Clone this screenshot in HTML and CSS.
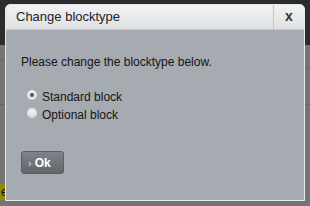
FILE: index.html
```html
<!DOCTYPE html>
<html>
<head>
<meta charset="utf-8">
<link rel="stylesheet" href="styles.css">
</head>
<body>
<div class="page">
  <div class="badge">e</div>
  <div class="dialog">
    <div class="titlebar">
      <div class="title">Change blocktype</div>
      <div class="close">x</div>
    </div>
    <div class="content">
      <p class="intro">Please change the blocktype below.</p>
      <div class="options">
        <label class="option"><input type="radio" name="bt" checked><span>Standard block</span></label>
        <label class="option"><input type="radio" name="bt"><span>Optional block</span></label>
      </div>
      <button class="ok"><span class="chev">›</span>Ok</button>
    </div>
  </div>
</div>
</body>
</html>
```
FILE: styles.css
```css
html, body {
  margin: 0;
  padding: 0;
}
body {
  width: 310px;
  height: 206px;
  overflow: hidden;
  font-family: "Liberation Sans", Arial, sans-serif;
}
.page {
  position: relative;
  width: 310px;
  height: 206px;
  box-sizing: border-box;
  padding: 4px 5px 0 5px;
  background:
    linear-gradient(#666 0 0) 0 59px / 5px 1px no-repeat,
    linear-gradient(#666 0 0) 0 104px / 5px 1px no-repeat,
    linear-gradient(#666 0 0) 305px 67px / 5px 1px no-repeat,
    linear-gradient(#666 0 0) 305px 104px / 5px 1px no-repeat,
    linear-gradient(to bottom, #2c2c2c 0, #2c2c2c 45px, #747474 45px, #747474 100%);
}
.badge {
  position: absolute;
  left: 0;
  top: 184px;
  width: 17px;
  height: 16px;
  background: #8c8a06;
  color: #111;
  font-size: 12px;
  line-height: 16px;
  padding-left: 1px;
  box-sizing: border-box;
}
.dialog {
  position: relative;
  width: 300px;
  height: 197px;
  box-sizing: border-box;
  border: 1px solid #e6e8ea;
  border-radius: 5px 5px 0 0;
  background: #a6aab1;
  display: flex;
  flex-direction: column;
}
.titlebar {
  height: 24px;
  display: flex;
  background: linear-gradient(to bottom, #f1f2f3, #dfe1e4);
  border-radius: 4px 4px 0 0;
  border-bottom: 1px solid #c9ccd0;
}
.title {
  flex: 1;
  padding-left: 10px;
  font-size: 13px;
  line-height: 24px;
  color: #222;
}
.close {
  width: 30px;
  border-left: 1px solid #c4c7cb;
  text-align: center;
  font-weight: bold;
  font-size: 14px;
  line-height: 23px;
  color: #333;
}
.content {
  flex: 1;
  padding: 25px 15px 0 15px;
  color: #151515;
  font-size: 12px;
}
.intro {
  margin: 0;
  line-height: 14px;
}
.options {
  margin-top: 19px;
  display: flex;
  flex-direction: column;
  padding-left: 6px;
}
.option {
  display: flex;
  align-items: center;
  height: 18px;
  line-height: 14px;
}
.option input {
  appearance: none;
  -webkit-appearance: none;
  margin: 0 5px 0 0;
  width: 10px;
  height: 10px;
  border-radius: 50%;
  background: radial-gradient(circle at 50% 35%, #f4f4f4, #d2d4d7);
  border: none;
  position: relative;
  top: -2px;
}
.option input:checked::after {
  content: "";
  position: absolute;
  left: 3px;
  top: 3px;
  width: 4px;
  height: 4px;
  border-radius: 50%;
  background: #555;
}
.ok {
  margin-top: 27px;
  width: 43px;
  height: 23px;
  padding: 0 0 0 6px;
  border: 1px solid #5a5d62;
  border-radius: 3px;
  background: linear-gradient(to bottom, #7f8288, #63666c);
  color: #fff;
  font-family: "Liberation Sans", Arial, sans-serif;
  font-weight: bold;
  font-size: 12px;
  text-align: left;
  display: flex;
  align-items: center;
}
.chev {
  color: #c7c9cc;
  font-size: 11px;
  margin-right: 3px;
}
```
